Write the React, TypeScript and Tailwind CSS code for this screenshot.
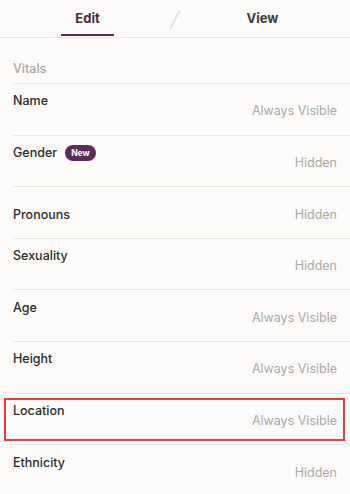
const rows = [
  { label: "Name", value: "Always Visible", sub: true },
  { label: "Gender", value: "Hidden", sub: true, badge: true },
  { label: "Pronouns", value: "Hidden", sub: false },
  { label: "Sexuality", value: "Hidden", sub: true },
  { label: "Age", value: "Always Visible", sub: true },
  { label: "Height", value: "Always Visible", sub: true },
  { label: "Location", value: "Always Visible", sub: true, highlight: true },
  { label: "Ethnicity", value: "Hidden", sub: true },
];

export default function App() {
  return (
    <main
      className="w-[350px] h-[494px] overflow-hidden bg-[#fcfbf9] text-[#2b2b2b]"
      style={{ fontFamily: "Inter, 'Noto Sans', sans-serif" }}
    >
      <div className="relative flex h-[38px] border-b border-[#e9e7e4]">
        <div className="flex-1 flex justify-center">
          <div className="relative flex items-center px-[14px] text-[13px] font-bold text-[#4a2647]">
            Edit
            <span className="absolute left-0 right-0 bottom-[1px] h-[2.5px] bg-[#5c2a59]" />
          </div>
        </div>
        <div className="flex-1 flex items-center justify-center text-[13px] font-bold text-[#3a3a3a]">
          View
        </div>
        <span className="absolute left-[174px] top-[9px] h-[21px] w-[1.5px] rotate-[28deg] bg-[#e4e2df]" />
      </div>

      <div className="pl-[13px]">
        <div className="h-[46px] flex items-end pb-[4px] border-b border-[#e9e7e4] text-[12.5px] font-medium text-[#a9a9a9]">
          Vitals
        </div>
        {rows.map((r) => (
          <div
            key={r.label}
            className="relative h-[51.6px] flex items-center justify-between pt-[5px] pr-[13px] border-b border-[#e9e7e4]"
          >
            <div className="flex flex-col">
              <div className="flex items-center gap-[8px] h-[16px] text-[12.5px] font-medium text-[#2b2b2b]">
                {r.label}
                {r.badge && (
                  <span className="h-[16px] px-[6px] rounded-full bg-[#5e2a5c] text-white text-[8.5px] font-bold flex items-center">
                    New
                  </span>
                )}
              </div>
              {r.sub && <div className="h-[20px]" />}
            </div>
            <div className="text-[12.5px] text-[#a9a9a9]">{r.value}</div>
            {r.highlight && (
              <div className="absolute left-[-9px] right-[5px] top-[4px] bottom-[3px] border-2 border-[#ee3b3b]" />
            )}
          </div>
        ))}
      </div>
    </main>
  );
}
